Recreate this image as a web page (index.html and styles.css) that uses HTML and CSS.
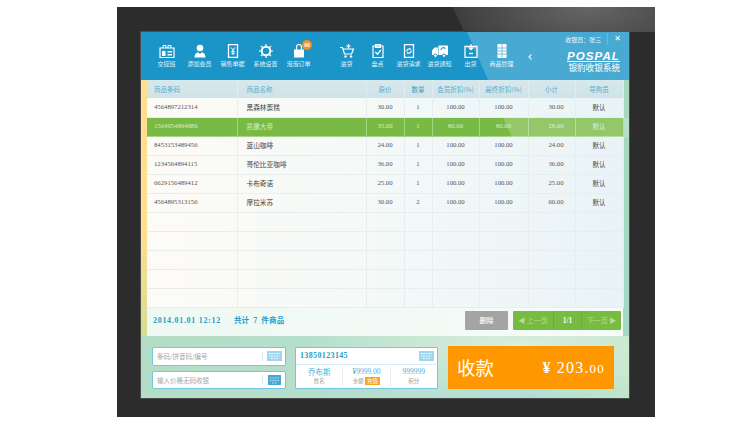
FILE: index.html
```html
<!DOCTYPE html>
<html lang="zh">
<head>
<meta charset="utf-8">
<title>POSPAL</title>
<link rel="stylesheet" href="styles.css">
</head>
<body>
<div class="frame">
  <div class="screen">
    <header class="top">
      <nav class="group first">
        <div class="tool"><svg viewBox="0 0 16 14"><path d="M1 4h14v9.500H1z" fill="none" stroke="#fff" stroke-width="1.200"/><path d="M4 4V1.500h3V4 M9 4V1.500h3V4" fill="none" stroke="#fff"/><path d="M3 7h3.500v5H3z M8.500 7H13v1.500H8.500z M8.500 10H13v1.500H8.500z" fill="#fff"/></svg><span>交接班</span></div>
        <div class="tool"><svg viewBox="0 0 16 14"><circle cx="8" cy="4" r="3.300" fill="#fff"/><path d="M2.500 13.500c0-3.500 2-4.800 3.500-5.300l2 1.800 2-1.800c1.500.5 3.500 1.800 3.500 5.300z" fill="#fff"/></svg><span>添加会员</span></div>
        <div class="tool"><svg viewBox="0 0 16 14"><path d="M3.500 .7h9v12.600h-9z" fill="none" stroke="#fff" stroke-width="1.300"/><path d="M6 3.500l2 2.500 2-2.500 M8 6v5 M6.300 7.500h3.400 M6.300 9.300h3.400" fill="none" stroke="#fff" stroke-width="1"/></svg><span>销售单据</span></div>
        <div class="tool"><svg viewBox="0 0 16 14"><circle cx="8" cy="7" r="4.300" fill="none" stroke="#fff" stroke-width="2"/><path d="M8 0v2 M8 12v2 M1 7h2 M13 7h2 M3 2l1.500 1.500 M11.500 10.500L13 12 M13 2l-1.500 1.500 M4.500 10.500L3 12" stroke="#fff" stroke-width="1.200"/></svg><span>系统设置</span></div>
        <div class="tool order"><svg viewBox="0 0 16 14"><path d="M3 5.500h10v8H3z" fill="#fff"/><path d="M5.500 6.500V3a2.500 2.500 0 0 1 5 0v3.500" fill="none" stroke="#fff" stroke-width="1.200"/></svg><span>泡泡订单</span><b class="badge">99</b></div>
      </nav>
      <nav class="group second">
        <div class="tool"><svg viewBox="0 0 16 14"><path d="M1 3.500h2.500l2 6.500h7l2-5H4.500" fill="none" stroke="#fff" stroke-width="1.200"/><path d="M9.500 0v4.500 M7.500 2.200h4" stroke="#fff" stroke-width="1.200"/><circle cx="6.500" cy="12.500" r="1.200" fill="#fff"/><circle cx="12" cy="12.500" r="1.200" fill="#fff"/></svg><span>进货</span></div>
        <div class="tool"><svg viewBox="0 0 16 14"><path d="M3 2h10v11.500H3z M5.500 .6h5v2.800h-5z" fill="none" stroke="#fff" stroke-width="1.200"/><path d="M5.300 8l2.200 2.200L10.800 6" fill="none" stroke="#fff" stroke-width="1.300"/></svg><span>盘点</span></div>
        <div class="tool"><svg viewBox="0 0 16 14"><path d="M3.500 .7h9v12.600h-9z" fill="none" stroke="#fff" stroke-width="1.300"/><path d="M5.800 7.500a2.500 2.500 0 0 1 4.200-2 M10.200 6.500a2.500 2.500 0 0 1-4.200 2" fill="none" stroke="#fff" stroke-width="1.200"/></svg><span>进货请求</span></div>
        <div class="tool"><svg viewBox="0 0 16 14"><path d="M0 6.500l2.500-3H6v7.500H0z M6.500 1.500H16v9.500H6.500z" fill="#fff"/><circle cx="3.500" cy="11.700" r="1.700" fill="#fff" stroke="#1b94c8"/><circle cx="12" cy="11.700" r="1.700" fill="#fff" stroke="#1b94c8"/><path d="M9 6a2.300 2.300 0 0 1 4.200-1.300" fill="none" stroke="#1b94c8" stroke-width="1.100"/></svg><span>进货通知</span></div>
        <div class="tool"><svg viewBox="0 0 16 14"><path d="M2 2.500h12v11H2z" fill="none" stroke="#fff" stroke-width="1.300"/><path d="M8 0v5.500 M5.800 3.500L8 5.700l2.200-2.200 M6 9.500h4" fill="none" stroke="#fff" stroke-width="1.300"/></svg><span>出货</span></div>
        <div class="tool"><svg viewBox="0 0 16 14"><path d="M3.500 0h9v14h-9z" fill="#fff"/><path d="M3.500 4h9 M3.500 7h9 M3.500 10h9 M8 0v14" stroke="#4aa9d4" stroke-width=".9"/></svg><span>商品管理</span></div>
      </nav>
      <svg class="chev" viewBox="0 0 4 6"><path d="M3.500.5L1 3l2.500 2.500" fill="none" stroke="#cfe9f5" stroke-width="1.200"/></svg>
      <div class="brand">
        <div class="user"><span>收银员：张三</span><i class="sep"></i><b class="close">✕</b></div>
        <div class="logo">POSPAL</div>
        <div class="slogan">银豹收银系统</div>
      </div>
    </header>

    <main class="body">
      <table class="grid">
        <colgroup><col class="c1"><col class="c2"><col class="c3"><col class="c4"><col class="c5"><col class="c6"><col class="c7"><col class="c8"></colgroup>
        <thead><tr><th class="left">商品条码</th><th class="left">商品名称</th><th>原价</th><th class="dark">数量</th><th>会员折扣(%)</th><th>最终折扣(%)</th><th>小计</th><th>导购员</th></tr></thead>
        <tbody>
          <tr><td class="code">4564897212314</td><td class="name">黑森林蛋糕</td><td>30.00</td><td>1</td><td>100.00</td><td>100.00</td><td class="sum">30.00</td><td class="cn">默认</td></tr>
          <tr class="sel"><td class="code">1564954894886</td><td class="name">凯撒大帝</td><td>35.00</td><td>1</td><td>80.00</td><td>80.00</td><td class="sum">28.00</td><td class="cn">默认</td></tr>
          <tr><td class="code">8453153489456</td><td class="name">蓝山咖啡</td><td>24.00</td><td>1</td><td>100.00</td><td>100.00</td><td class="sum">24.00</td><td class="cn">默认</td></tr>
          <tr><td class="code">1234564894115</td><td class="name">哥伦比亚咖啡</td><td>36.00</td><td>1</td><td>100.00</td><td>100.00</td><td class="sum">36.00</td><td class="cn">默认</td></tr>
          <tr><td class="code">6629156489412</td><td class="name">卡布奇诺</td><td>25.00</td><td>1</td><td>100.00</td><td>100.00</td><td class="sum">25.00</td><td class="cn">默认</td></tr>
          <tr><td class="code">4564895313156</td><td class="name">摩拉米苏</td><td>30.00</td><td>2</td><td>100.00</td><td>100.00</td><td class="sum">60.00</td><td class="cn">默认</td></tr>
          <tr><td></td><td></td><td></td><td></td><td></td><td></td><td></td><td></td></tr>
          <tr><td></td><td></td><td></td><td></td><td></td><td></td><td></td><td></td></tr>
          <tr><td></td><td></td><td></td><td></td><td></td><td></td><td></td><td></td></tr>
          <tr><td></td><td></td><td></td><td></td><td></td><td></td><td></td><td></td></tr>
          <tr><td></td><td></td><td></td><td></td><td></td><td></td><td></td><td></td></tr>
        </tbody>
      </table>
      <div class="summary">
        <span class="date">2014.01.01 12:12</span>
        <span class="total">共计 <em>7</em> 件商品</span>
        <button class="del">删除</button>
        <div class="pager">
          <span class="pg prev">◀ 上一页</span>
          <span class="pg now">1/1</span>
          <span class="pg next">下一页 ▶</span>
        </div>
      </div>
    </main>

    <footer class="panel">
      <div class="inputs">
        <div class="field"><span>条码/拼音码/编号</span><i class="bar"></i><svg class="kb" viewBox="0 0 15 10"><path d="M0 0h15v10H0z" fill="#9fd6ee"/><path d="M2 2.500h11 M2 5h11 M4 7.500h7" stroke="#fff" stroke-width="1" stroke-dasharray="1 .6"/></svg></div>
        <div class="field"><span>输入价格无码收银</span><i class="bar"></i><svg class="kb" viewBox="0 0 15 10"><path d="M1 0h13v10H1z" fill="#45a9d6"/><path d="M3 3h9 M3 5.500h9 M5 8h5" stroke="#bfe5f5" stroke-width="1" stroke-dasharray="1 .6"/></svg></div>
      </div>
      <div class="member">
        <div class="phone"><span>13850123145</span><svg class="kb" viewBox="0 0 15 10"><path d="M0 0h15v10H0z" fill="#9fd6ee"/><path d="M2 2.500h11 M2 5h11 M4 7.500h7" stroke="#fff" stroke-width="1" stroke-dasharray="1 .6"/></svg></div>
        <div class="stats">
          <div class="stat"><b class="cnv">乔布斯</b><small>姓名</small></div>
          <div class="stat"><b>¥9999.00</b><small>余额 <mark>充值</mark></small></div>
          <div class="stat"><b>999999</b><small>积分</small></div>
        </div>
      </div>
      <button class="pay"><span class="payl">收款</span><span class="amount"><b>¥</b> 203.<small>00</small></span></button>
    </footer>
    <div class="gloss"></div>
  </div>
  <div class="shine"></div>
</div>
</body>
</html>
```

FILE: styles.css
```css
* { box-sizing: border-box; }
html, body { margin: 0; padding: 0; background: #fff; }
body { width: 750px; height: 430px; overflow: hidden; padding: 7px 0 0 117px; font-family: "Noto Sans CJK SC", "Liberation Sans", sans-serif; }

.frame { position: relative; width: 538px; height: 410px; padding: 25px 24px 19px; background: #2c2c2c; overflow: hidden; }
.shine { position: absolute; inset: 0; clip-path: polygon(336px 0, 538px 0, 538px 25px, 347px 25px); background: radial-gradient(ellipse 170px 70px at 470px 0, #666, #3b3b3b 85%, #333); }
.screen { position: relative; width: 488px; height: 366px; display: flex; flex-direction: column; overflow: hidden; outline: 1px solid #4d4d4d;
  background: linear-gradient(#ffdf8e 55%, #b9dc96) left top / 6px 100% no-repeat, linear-gradient(#a9d8bd, #a5d8c8) right top / 6px 100% no-repeat, #fff; }
.gloss { position: absolute; inset: 0; pointer-events: none; background: rgba(255,255,255,.2); clip-path: polygon(326px 0, 488px 0, 488px 48px, 347px 48px, 362px 86px, 488px 86px, 488px 105px, 371px 105px, 362px 86px, 347px 48px); }

/* top bar */
.top { height: 48px; flex: none; background: #1b94c8; display: flex; color: #fff; padding-left: 9px; position: relative; }
.group { display: flex; padding-top: 12px; }
.group.first { margin-right: 16px; }
.tool { position: relative; width: 33px; display: flex; flex-direction: column; align-items: center; font-size: 6px; color: #e3f4fb; line-height: 8px; }
.group.second .tool { width: 31px; }
.tool svg { width: 16px; height: 14px; margin-bottom: 2px; display: block; }
.tool span { white-space: nowrap; }
.badge { position: absolute; left: 20px; top: -4px; width: 10px; height: 10px; border-radius: 50%; background: #f6921e; color: #fff; font: bold 5px/10px "Liberation Sans", sans-serif; text-align: center; }
.chev { width: 4px; height: 6px; margin: 22px 0 0 11px; flex: none; }
.brand { position: relative; margin-left: auto; width: 60px; margin-right: 9px; display: flex; flex-direction: column; align-items: flex-end; }
.user { display: flex; align-items: center; white-space: nowrap; height: 14px; font-size: 6px; color: #e6f5fb; margin-right: -1px; }
.sep { width: 1px; height: 12px; background: rgba(255,255,255,.2); margin: 0 6px 0 6px; }
.close { font: bold 8px/1 "DejaVu Sans", sans-serif; color: #fff; }
.logo { margin-top: 6px; font: italic bold 11.500px/9px "Liberation Sans", sans-serif; letter-spacing: 1.100px; color: #fff; border-bottom: 1px solid #fff; height: 10px; }
.slogan { margin-top: 0; font-size: 8.600px; line-height: 10px; color: #fff; white-space: nowrap; }

/* table */
.body { flex: 1; min-height: 0; margin-left: 6px; margin-right: 6px; background: linear-gradient(90deg, #fdfbf6, #f4f9f8 50%, #e9f3f7); }
.grid { width: 476px; table-layout: fixed; border-collapse: collapse; font: 6.700px/1 "Liberation Serif", serif; color: #555; }
.c1 { width: 90px; } .c2 { width: 129px; } .c3 { width: 38px; } .c4 { width: 28px; }
.c5 { width: 47px; } .c6 { width: 49px; } .c7 { width: 47px; } .c8 { width: 48px; }
thead tr { height: 18px; background: linear-gradient(#d8e8ec, #cfe3e8); }
th { font: 6.500px/1 "Noto Sans CJK SC", sans-serif; color: #5aaccb; text-align: center; border-right: 1px solid #e0edf0; padding: 0; }
th.dark { color: #3a9cc2; }
th.left { text-align: left; padding-left: 7px; }
th.left + th.left { padding-left: 9px; }
tbody tr { height: 19px; }
td { text-align: center; padding: 0; border-right: 1px solid #e7eeee; border-bottom: 1px solid #e7eeee; }
td.code { text-align: left; padding-left: 7px; }
td.name { text-align: left; padding-left: 9px; font: 6.700px/1 "Noto Sans CJK SC", sans-serif; color: #444; }
td.sum { text-align: right; padding-right: 11px; }
td.cn { font: 6.500px/1 "Noto Sans CJK SC", sans-serif; color: #444; }
tr.sel td { background: #78ba45; color: #d9efc6; border-right-color: #a5d482; border-bottom-color: #a5d482; }

.summary { height: 29px; display: flex; align-items: center; padding: 0 2px 3px 6px; background: linear-gradient(90deg, #eef9f3, #f5fbf9); }
.date, .total { font: bold 8px/1 "Liberation Serif", "Noto Sans CJK SC", serif; color: #2a9cc9; letter-spacing: .7px; }
.total { margin-left: 13px; font-family: "Noto Sans CJK SC", sans-serif; font-size: 7.500px; letter-spacing: .2px; }
.total em { font: bold 8px "Liberation Serif", serif; margin: 0 2px; }
.del { margin-left: auto; width: 43px; height: 19px; border: 0; border-radius: 1px; background: #a4a4a4; color: #f0f0f0; font: bold 7px/1 "Noto Sans CJK SC", sans-serif; padding: 0; }
.pager { display: flex; margin-left: 5px; height: 19px; background: #78bb43; border-radius: 1px; }
.pg { display: flex; align-items: center; justify-content: center; font: 7px/1 "Noto Sans CJK SC", sans-serif; color: #b5dd97; white-space: nowrap; }
.prev { width: 40px; }
.now { width: 29px; color: #f2f9ec; font: bold 7.500px/1 "Liberation Serif", serif; border-left: 1px solid #6cae3a; border-right: 1px solid #6cae3a; }
.next { width: 39px; }

/* bottom */
.panel { height: 62px; flex: none; display: flex; padding: 11px 15px 0 11px; background: radial-gradient(ellipse 220px 60px at 380px 10px, #dcefd8, transparent), linear-gradient(90deg, #b4ddc6, #b5dfd0 55%, #a9d9d6 80%, #bfe5c9); }
.inputs { width: 134px; display: flex; flex-direction: column; gap: 5px; margin-right: 9px; }
.field { height: 18.500px; background: #fff; border: 1px solid #77c6e1; border-radius: 2px; display: flex; align-items: center; padding: 0 3px 0 4px; font-size: 6.500px; color: #a8a8a8; }
.bar { width: 1px; height: 9px; background: #d5e8ee; margin-left: auto; margin-right: 4px; }
.kb { width: 15px; height: 10px; flex: none; }
.member { width: 143px; height: 42px; background: #fff; border: 1px solid #77c6e1; border-radius: 1px; display: flex; flex-direction: column; }
.phone { height: 17px; display: flex; align-items: center; justify-content: space-between; padding: 0 3px 0 4px; border-bottom: 1px solid #d9eef5; font: bold 8px/1 "Liberation Serif", serif; letter-spacing: .36px; color: #2a9cc9; }
.stats { display: flex; flex: 1; padding: 2px 0; }
.stat { flex: 1; display: flex; flex-direction: column; align-items: center; gap: 1px; border-right: 1px solid #e4eff3; }
.stat:last-child { border-right: 0; }
.stat b { font: 7.500px/9px "Liberation Serif", serif; color: #4fb0d4; }
.stat b.cnv { font: 7.500px/9px "Noto Sans CJK SC", sans-serif; }
.stat small { font-size: 5.500px; line-height: 8px; color: #999; }
mark { background: #f5a623; color: #fff; padding: 0 2px; font-size: 5.500px; }
.pay { margin-left: 10px; width: 166px; height: 43px; margin-top: -1px; border: 0; background: #ff9800; color: #fff; display: flex; align-items: center; justify-content: space-between; padding: 0 9px; font-family: "Noto Sans CJK SC", sans-serif; }
.payl { font-size: 18.500px; line-height: 1; }
.amount { font: 16px/1 "Liberation Serif", serif; letter-spacing: 1.200px; }
.amount small { font-size: 13px; }
```
